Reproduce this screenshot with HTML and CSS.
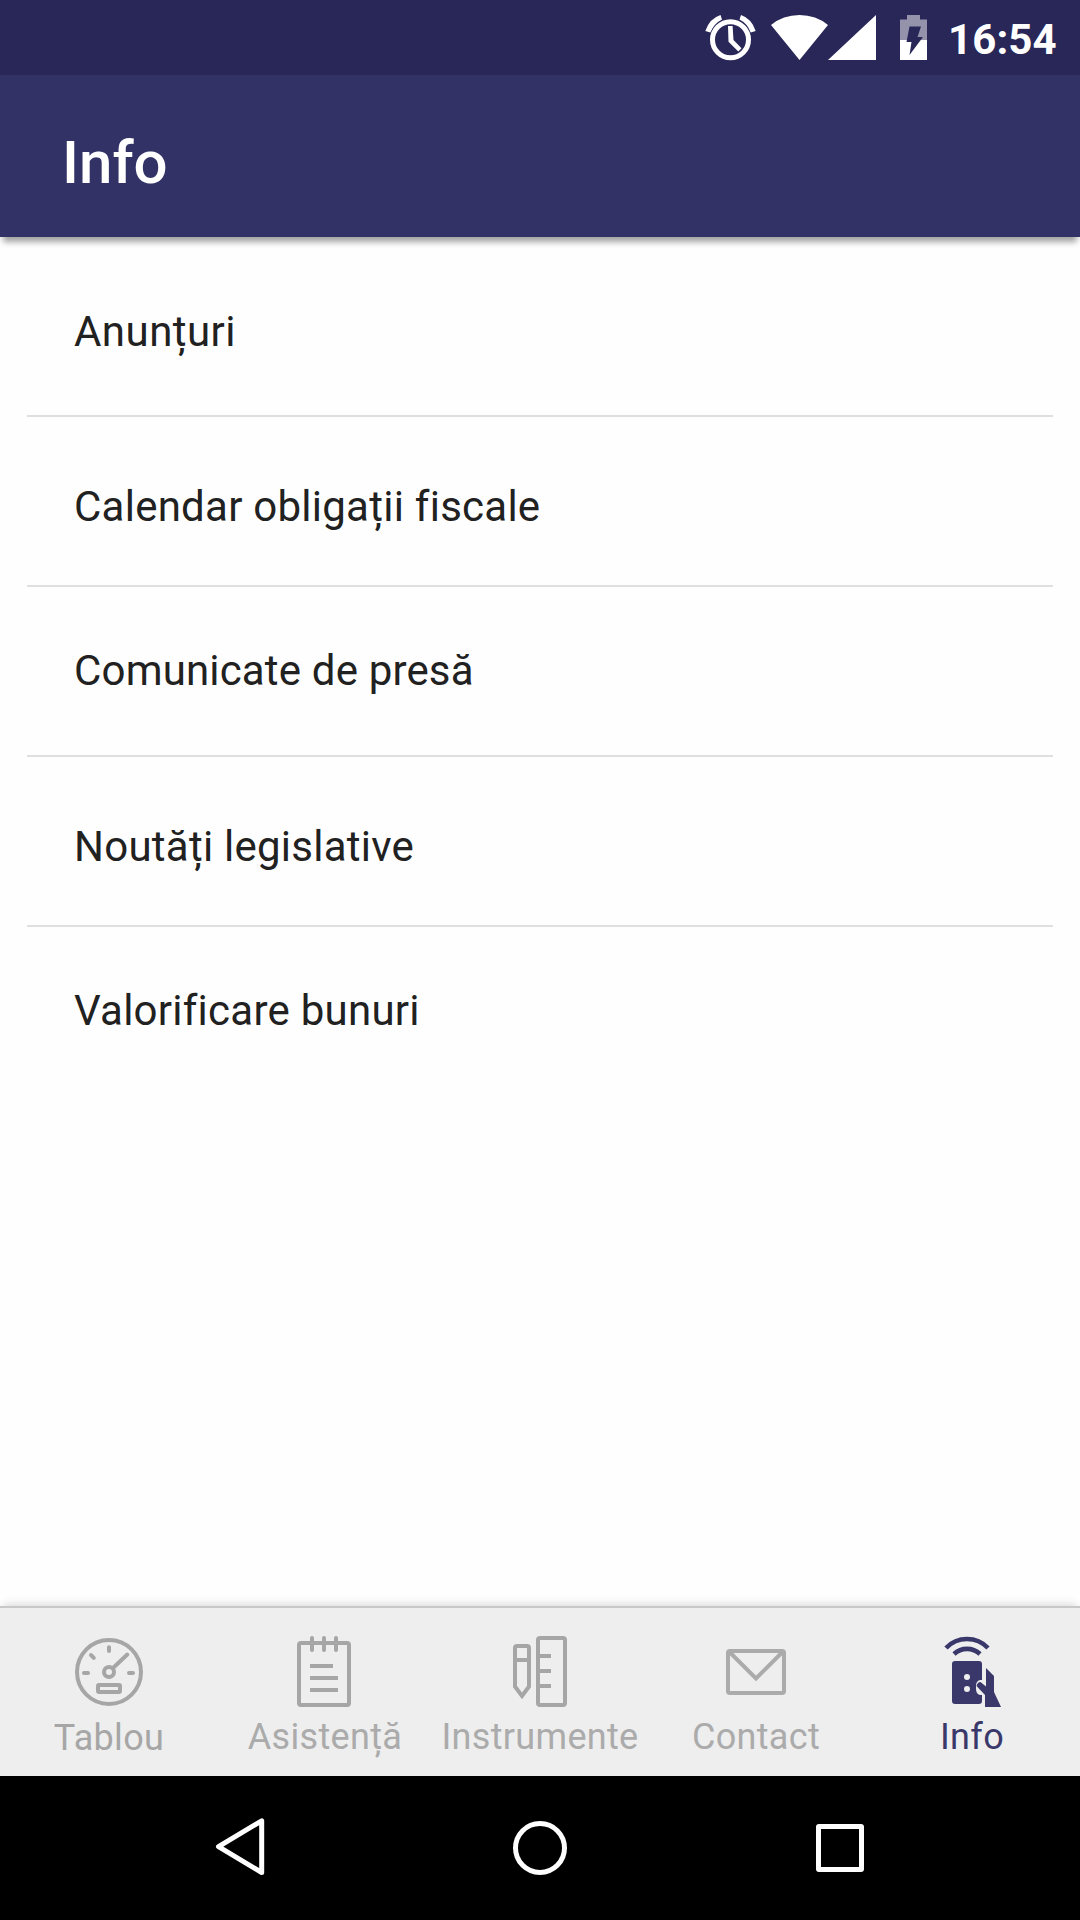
FILE: index.html
```html
<!DOCTYPE html>
<html lang="ro">
<head>
<meta charset="utf-8">
<title>Info</title>
<link rel="stylesheet" href="styles.css">
</head>
<body>
<div class="status-bar">
  <svg class="status-icons" viewBox="700 0 240 75" width="240" height="75">
    <circle cx="730.5" cy="39.7" r="18" fill="none" stroke="#fff" stroke-width="5"/>
    <path d="M728 26h4.600l.9 14 8 8.200-3.200 3.200-9.800-9.600z" fill="#fff"/>
    <path d="M720.500 15l1.500 4.600q-8 4-11.700 13l-5-1.500q4-12.500 15.200-16.100zM741 15l-1.500 4.600q8 4 11.200 13l5-1.500q-4-12.500-14.700-16.100z" fill="#fff"/>
    <path d="M771 25Q783 15 799.500 15T828 25L799.500 60zM828 60h48V15z" fill="#fff"/>
    <path d="M907 15h13v4.500h7V40h-27V19.500h7z" fill="#fff" fill-opacity=".5"/>
    <path d="M900 40h27v20h-27z" fill="#fff"/>
    <path d="M909.500 26.500h11.500l-3.500 10.500h5.500L909.500 55l2-13h-5z" fill="#282757"/>
  </svg>
  <span class="clock">16:54</span>
</div>
<header class="app-bar"><h1 class="title">Info</h1></header>
<main class="content">
  <ul class="list">
    <li class="row row-first">Anunțuri</li>
    <li class="row row-low">Calendar obligații fiscale</li>
    <li class="row row-tight">Comunicate de presă</li>
    <li class="row row-low">Noutăți legislative</li>
    <li class="row">Valorificare bunuri</li>
  </ul>
</main>
<nav class="tabs">
  <a class="tab tab-low">
    <svg class="icon" viewBox="0 0 80 80">
      <circle cx="41" cy="44" r="32"/><circle cx="41" cy="44" r="5"/>
      <path stroke-linecap="round" d="M45 40L59.300 26.500M41 19.300V23M16 45h4M61 45h4M23 27l2.800 2.800"/>
      <rect x="30" y="57" width="22" height="7" rx="1"/>
    </svg>
    <span class="label label-shift">Tablou</span>
  </a>
  <a class="tab">
    <svg class="icon" viewBox="0 0 80 80">
      <rect x="15" y="15" width="50" height="62" rx="2"/>
      <path stroke-linecap="round" d="M28 10v12M40 10v12M52 10v12"/>
      <path d="M26 38h23M26 50h28M26 62h28"/>
    </svg>
    <span class="label label-shift">Asistență</span>
  </a>
  <a class="tab">
    <svg class="icon" viewBox="0 0 80 80">
      <rect x="38" y="10" width="27" height="67" rx="2"/>
      <path d="M38 28h13M38 43h13M38 58h13M15 32h14M17 18h10q2 0 2 2v38.500l-7 9.500-7-9.500V20q0-2 2-2z"/>
    </svg>
    <span class="label">Instrumente</span>
  </a>
  <a class="tab">
    <svg class="icon icon-light" viewBox="0 0 80 80">
      <rect x="12" y="23" width="56" height="42" rx="2"/>
      <path d="M13.500 24L40 50.500 66.500 24"/>
    </svg>
    <span class="label">Contact</span>
  </a>
  <a class="tab tab-active">
    <svg class="icon" viewBox="0 0 80 80">
      <path stroke-width="4.600" d="M14 20A29 29 0 0 1 56 20M22 26A19 19 0 0 1 48 26"/>
      <path class="solid" fill-rule="evenodd" d="M23 33h24q3 0 3 3v16h-2q-4 1-4 6v3q0 5 4 6h2v6q0 3-3 3H23q-3 0-3-3V36q0-3 3-3zM35 46a3 3 0 1 0 0 6 3 3 0 1 0 0-6zM35 58a3 3 0 1 0 0 6 3 3 0 1 0 0-6z"/>
      <path class="solid" d="M54 40l8 8v16l7 15H53V67l-8.500-9q1-4 4-4l5.500 4.500z"/>
    </svg>
    <span class="label">Info</span>
  </a>
</nav>
<footer class="nav-bar">
  <svg class="nav-icon" viewBox="0 0 60 60"><path d="M51.700 2.800v51.700L8.500 28.600z"/></svg>
  <svg class="nav-icon" viewBox="0 0 60 60"><circle cx="30" cy="30" r="24.500"/></svg>
  <svg class="nav-icon" viewBox="0 0 60 60"><rect x="8.500" y="8.500" width="43" height="43" rx=".5"/></svg>
</footer>
</body>
</html>
```
FILE: styles.css
```css
* { box-sizing: border-box; }
body {
  margin: 0;
  width: 1080px;
  height: 1920px;
  display: flex;
  flex-direction: column;
  background: #fefefe;
  color: #212121;
  font-family: Roboto, sans-serif;
  overflow: hidden;
}
.status-bar {
  height: 75px;
  display: flex;
  justify-content: flex-end;
  background: #282757;
  color: #fff;
}
.clock {
  width: 140px;
  padding: 15px 0 0 8px;
  font-size: 42px;
  font-weight: 700;
  line-height: 50px;
  letter-spacing: .1px;
}
.app-bar {
  height: 162px;
  padding: 53px 62px 0;
  background: #333266;
  color: #fff;
  box-shadow: 0 8px 6px -3px rgba(0, 0, 0, .36);
}
.title {
  margin: 0;
  font-size: 60px;
  font-weight: 500;
  line-height: 70px;
}
.content { flex: 1; }
.list {
  margin: 0 27px;
  padding: 0;
  list-style: none;
}
.row {
  height: 170px;
  padding: 59px 47px 0;
  border-bottom: 2px solid #dfdfdf;
  font-size: 42px;
  line-height: 50px;
  letter-spacing: .006em;
}
.row-first { height: 180px; padding-top: 70px; letter-spacing: .011em; }
.row-low { padding-top: 65px; }
.row-tight { letter-spacing: .004em; }
.row:last-child { border-bottom: 0; }
.tabs {
  height: 170px;
  display: grid;
  grid-template-columns: repeat(5, 1fr);
  background: #eee;
  border-top: 2px solid #c8c8c8;
  box-shadow: 0 -5px 8px -3px rgba(0, 0, 0, .14);
}
.tab {
  display: flex;
  flex-direction: column;
  align-items: center;
  gap: 8px;
  padding-top: 20px;
  color: #ababab;
  font-size: 36px;
  line-height: 42px;
  letter-spacing: .009em;
}
.tab-low { gap: 9px; color: #a6a6a6; }
.tab-active { color: #3a386a; }
.label-shift { padding-left: 2px; }
.icon {
  width: 80px;
  height: 80px;
  fill: none;
  stroke: #a6a6a6;
  stroke-width: 4;
}
.icon-light { stroke: #ababab; }
.tab-active .icon { stroke: #3a386a; }
.icon .solid { fill: #3a386a; stroke: none; }
.nav-bar {
  height: 144px;
  display: flex;
  justify-content: center;
  align-items: center;
  gap: 240px;
  background: #000;
}
.nav-icon {
  width: 60px;
  height: 60px;
  fill: none;
  stroke: #fff;
  stroke-width: 5;
  stroke-linejoin: round;
}
```
